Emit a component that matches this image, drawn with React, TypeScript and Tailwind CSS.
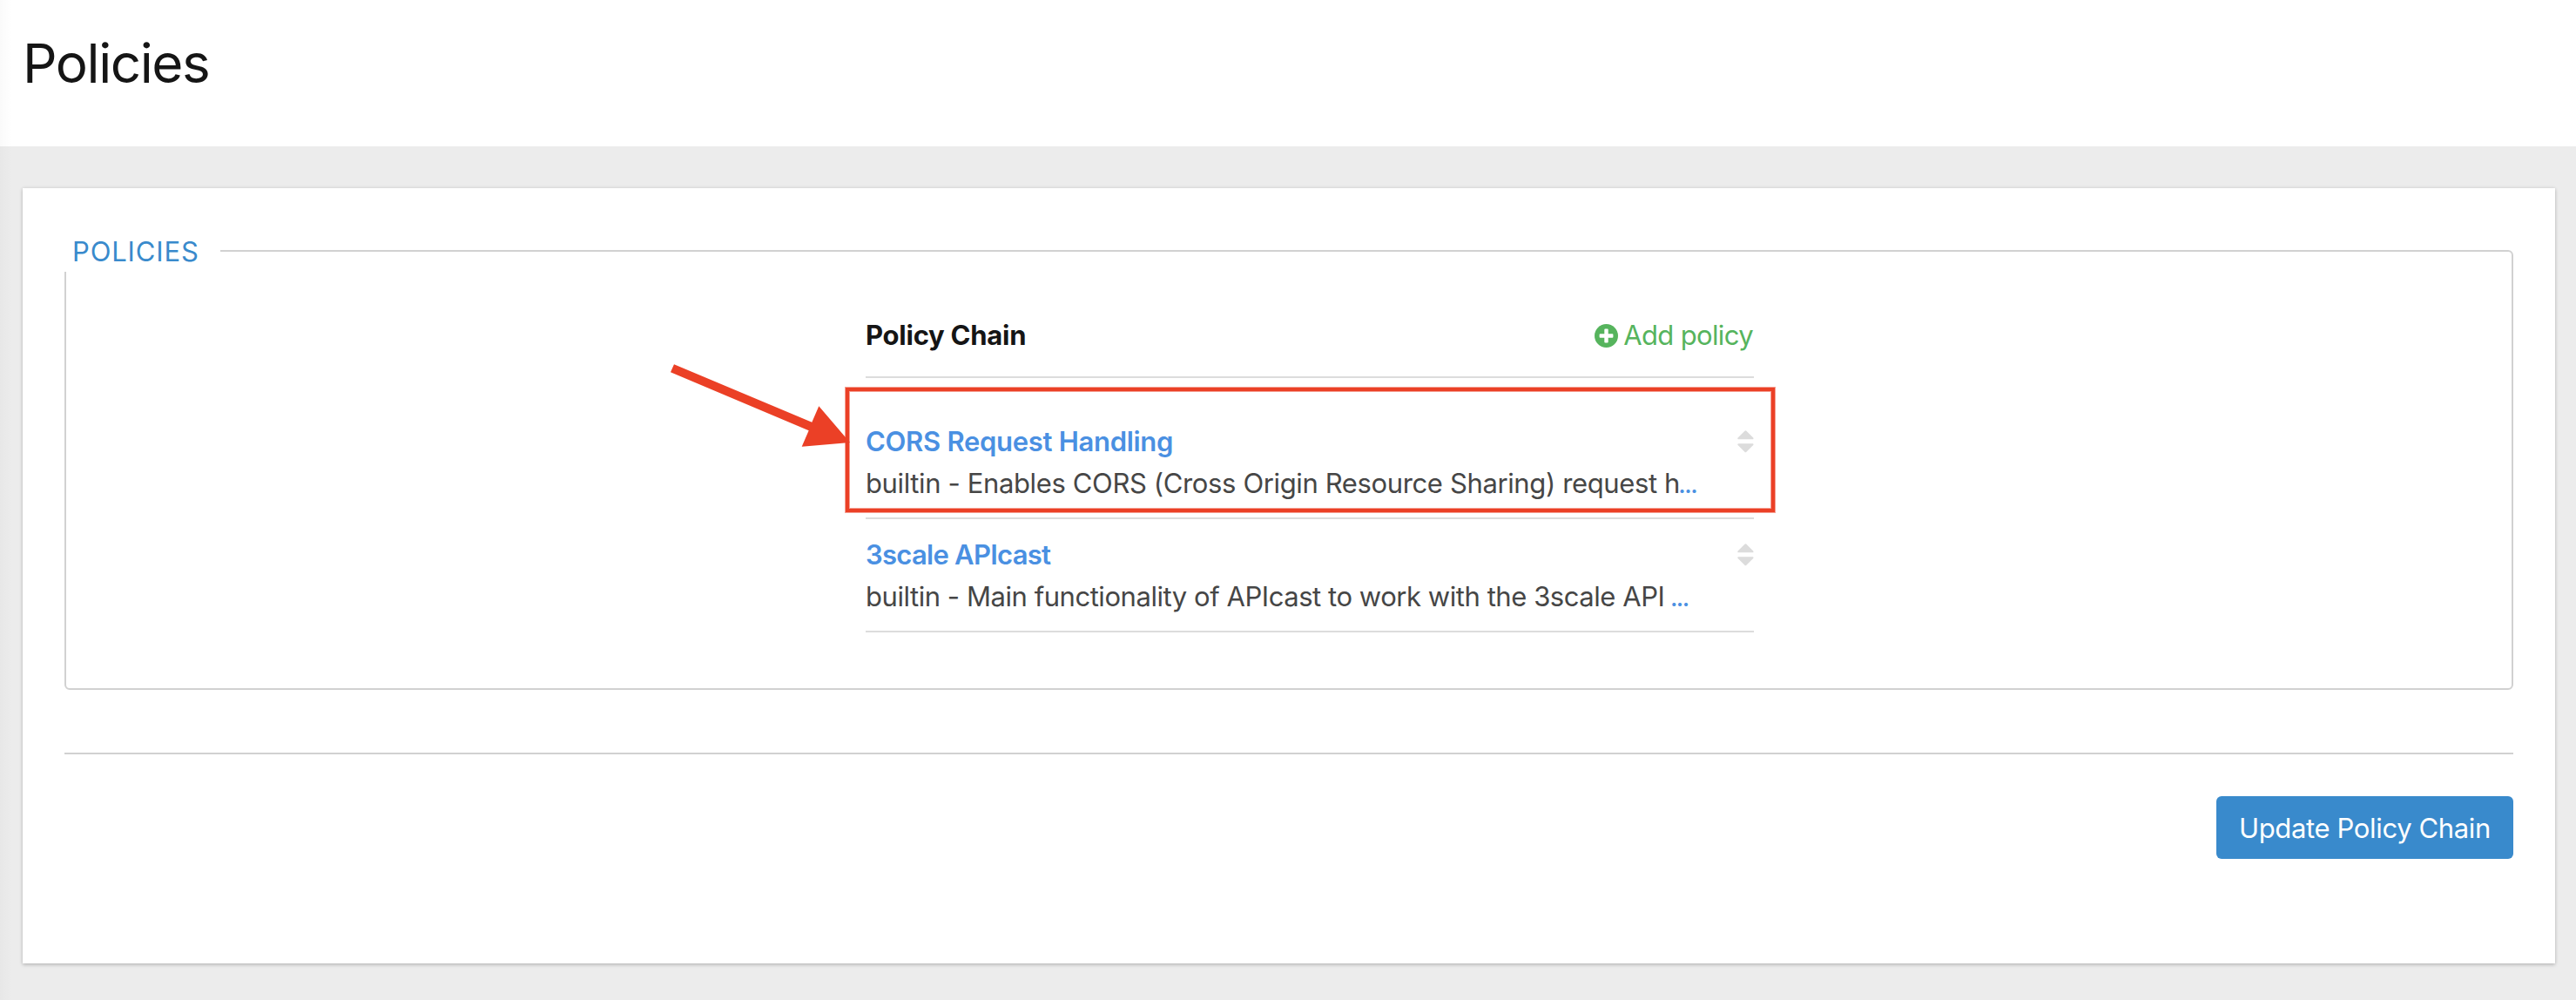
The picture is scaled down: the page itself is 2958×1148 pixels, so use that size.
type Policy = {
  name: string;
  summary: string;
  nameClass: string;
  summaryClass: string;
  rowClass: string;
};

const policies: Policy[] = [
  {
    name: 'CORS Request Handling',
    summary: 'builtin - Enables CORS (Cross Origin Resource Sharing) request h',
    nameClass: 'tracking-[-0.294px]',
    summaryClass: 'tracking-[-0.37px]',
    rowClass: 'pt-12',
  },
  {
    name: '3scale APIcast',
    summary: 'builtin - Main functionality of APIcast to work with the 3scale API ',
    nameClass: 'tracking-[-0.73px]',
    summaryClass: 'tracking-[-0.45px]',
    rowClass: 'pt-4',
  },
];

function PlusCircle() {
  return (
    <svg className="mr-[6px] h-[27px] w-[27px]" viewBox="0 0 27 27">
      <circle cx="13.5" cy="13.5" r="13.5" fill="#56b45d" />
      <path
        d="M12.200 5.600h2.600a.9.9 0 0 1 .9.9v4.800h4.800a.9.9 0 0 1 .9.9v2.600a.9.9 0 0 1-.9.9h-4.800v4.800a.9.9 0 0 1-.9.9h-2.600a.9.9 0 0 1-.9-.9v-4.800H6.500a.9.9 0 0 1-.9-.9v-2.600a.9.9 0 0 1 .9-.9h4.800V6.500a.9.9 0 0 1 .9-.9z"
        fill="#fff"
      />
    </svg>
  );
}

function SortHandle() {
  return (
    <svg className="h-[26px] w-[19px]" viewBox="0 0 19 26">
      <path
        d="M.6 8.600 8.400.8a1.400 1.400 0 0 1 2 0l7.800 7.800c.6.7.3 1.700-.7 1.700H1.300C.3 10.300 0 9.300.6 8.600zM.6 17l7.800 7.800a1.400 1.400 0 0 0 2 0L18.200 17c.6-.7.3-1.700-.7-1.700H1.300C.3 15.300 0 16.300.6 17z"
        fill="#dcdcdc"
      />
    </svg>
  );
}

function PolicyRow({ policy }: { policy: Policy }) {
  return (
    <li className={`border-b-2 border-[#dcdcdc] pb-4 ${policy.rowClass}`}>
      <div className="flex h-12 items-center justify-between pt-[2px]">
        <h3 className={`font-semibold text-[#4a90e2] ${policy.nameClass}`}>{policy.name}</h3>
        <SortHandle />
      </div>
      <p className={`h-12 whitespace-pre text-[#464646] ${policy.summaryClass}`}>
        {policy.summary}
        <span className="-ml-[2px] tracking-[-2px] text-[#4a90e2]">...</span>
      </p>
    </li>
  );
}

export default function App() {
  return (
    <div className="relative h-[1148px] w-[2958px] overflow-hidden bg-[#ececec] font-['Inter',sans-serif] text-[31px] leading-[50px] text-[#151515]">
      <header className="h-[168px] bg-white pt-[41px] pl-[26px]">
        <h1 className="text-[62px] leading-[64px] tracking-[-1.436px]">Policies</h1>
      </header>

      <main className="mx-[26px] mt-12 mr-6 h-[890px] bg-white p-12 shadow-[0_2px_4px_rgba(3,3,3,0.16),0_0_4px_rgba(3,3,3,0.12)]">
        <section className="mt-[23px] h-[505px] rounded-[6px] border-2 border-[#d1d1d1]">
          <h2 className="-mt-[25px] -ml-[2px] h-12 w-[179px] bg-white pl-[9px] tracking-[0.863px] text-[#398acc]">
            POLICIES
          </h2>
          <div className="mt-12 ml-[918px] w-[1020px]">
            <div className="flex h-[74px] justify-between border-b-2 border-[#dcdcdc]">
              <h3 className="font-bold tracking-[-0.25px]">Policy Chain</h3>
              <button className="flex h-12 items-center pt-[2px] pr-px tracking-[-0.64px] text-[#56b45d]">
                <PlusCircle />
                Add policy
              </button>
            </div>
            <ul>
              {policies.map((policy) => (
                <PolicyRow key={policy.name} policy={policy} />
              ))}
            </ul>
          </div>
        </section>

        <hr className="mt-[72px] border-t-2 border-[#d1d1d1]" />

        <div className="mt-12 flex justify-end">
          <button className="h-[72px] w-[341px] rounded-[6px] bg-[#398acc] pt-[2px] tracking-[-0.358px] text-white">
            Update Policy Chain
          </button>
        </div>
      </main>

      {/* Shade cast along the left edge by the neighbouring navigation */}
      <div className="absolute inset-y-0 left-0 w-[14px] bg-linear-to-r from-black/2 to-transparent" />

      {/* Highlight around the first policy, with its pointer */}
      <div className="absolute top-[445px] left-[971px] h-[143px] w-[1067px] border-4 border-[#eb4026] shadow-[0_0_0_1px_#eb402680,inset_0_0_0_1px_#eb402680]" />
      <svg className="absolute top-[410px] left-[764px] h-[110px] w-[220px]" viewBox="764 410 220 110">
        <path
          d="M774 418.300 932.300 484.700 940.300 466.300 976 508 920.700 512.700 928.700 494.300 770 427.300z"
          fill="#eb4026"
        />
      </svg>
    </div>
  );
}
